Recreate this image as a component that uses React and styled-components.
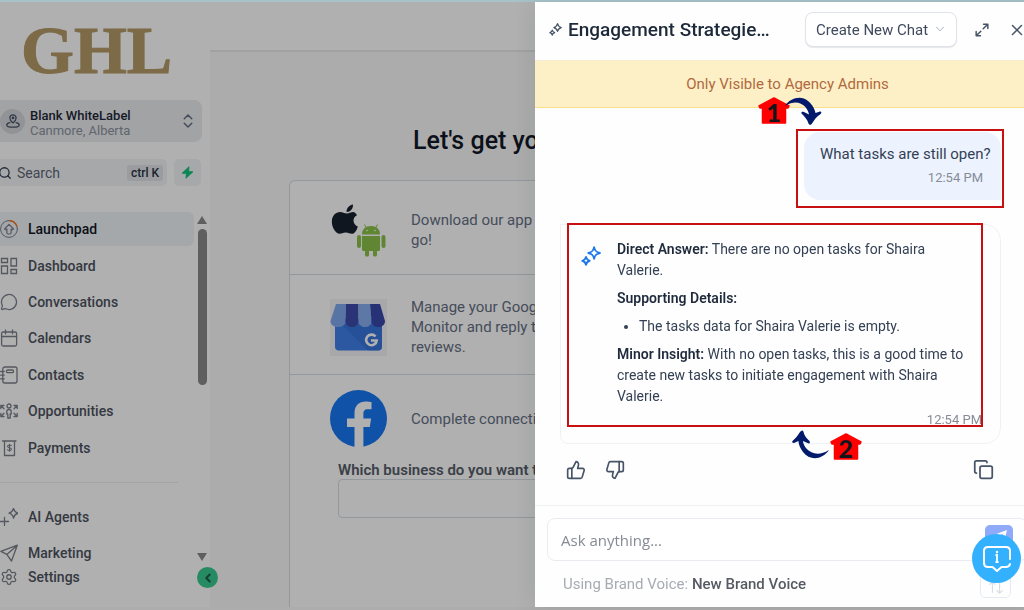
import styled, { createGlobalStyle } from "styled-components";
import {
  ChevronDown,
  ChevronLeft,
  ChevronsUpDown,
  Copy,
  MessageCircle,
  Search,
  Settings,
  ThumbsDown,
  ThumbsUp,
  X,
} from "lucide-react";

const NavItems = [
  { label: "Launchpad", icon: "launchpad", active: true },
  { label: "Dashboard", icon: "dashboard" },
  { label: "Conversations", icon: "conversations" },
  { label: "Calendars", icon: "calendars" },
  { label: "Contacts", icon: "contacts" },
  { label: "Opportunities", icon: "opportunities" },
  { label: "Payments", icon: "payments" },
];

const MoreItems = [
  { label: "AI Agents", icon: "agents" },
  { label: "Marketing", icon: "marketing" },
];

const Line = ({ size = 18, width = 1.3, children }) => (
  <svg
    width={size}
    height={size}
    viewBox="0 0 18 18"
    fill="none"
    stroke="currentColor"
    strokeWidth={width}
    strokeLinecap="round"
    strokeLinejoin="round"
    aria-hidden="true"
  >
    {children}
  </svg>
);

const icons = {
  launchpad: (
    <Line>
      <circle cx="9" cy="9" r="8.4" strokeWidth="1" />
      <path d="M9.5.6a8.4 8.4 0 0 1 7.4 5.6" stroke="#f97316" />
      <path
        d="M9 4.3 4.9 8.5c-.6.7 0 1.4.8 1.1l1.2-.5v3.7c0 .8.5 1.2 1.2 1.2h1.8c.7 0 1.2-.4 1.2-1.2V9.1l1.2.5c.8.3 1.4-.4.8-1.1z"
        strokeWidth="1.2"
      />
    </Line>
  ),
  dashboard: (
    <Line>
      <path
        d="M1.5 1.5h6v4h-6zM1.5 9h6v7.5h-6zM11 1.5h5.5V9H11zM11 12.5h5.5v4H11z"
        strokeLinejoin="miter"
      />
    </Line>
  ),
  conversations: <MessageCircle size={18} strokeWidth={1.7} />,
  calendars: (
    <Line>
      <rect x="1.6" y="3" width="15" height="14" rx="1.5" />
      <path d="M1.6 7.5h15M5.5.8v4M12.5.8v4" />
    </Line>
  ),
  contacts: (
    <Line>
      <rect x="2.8" y="1" width="14.2" height="16" rx="2" />
      <rect x="6.5" y="4" width="7" height="2.6" rx="1.2" />
      <path d="M.6 5.5h3.6M.6 9.2h3.6M.6 12.8h3.6" />
    </Line>
  ),
  opportunities: (
    <Line>
      <circle cx="9" cy="4" r="2" />
      <path d="M9 7.5c-1.5 0-2.2 1-2.2 2V12h1v4h2.4v-4h1V9.5c0-1-.7-2-2.2-2z" />
      <path d="M.8 3.5H4M.8 3.5v3M1 3.7l3 3M17.2 3.5H14M17.2 3.5v3M17 3.7l-3 3M.8 14.5H4M.8 14.5v-3M1 14.3l3-3M17.2 14.5H14M17.2 14.5v-3M17 14.3l-3-3" />
    </Line>
  ),
  payments: (
    <Line>
      <path d="M2.5 2H16M4.5 2v14.5h10V2" />
      <path
        d="M11.3 6.6c-.5-.7-3.7-1-3.7.8 0 1.7 3.8 1 3.8 2.8 0 1.7-3.3 1.5-3.9.6M9.5 5.2v7"
        strokeWidth="1.1"
      />
    </Line>
  ),
  agents: (
    <Line>
      <path d="M13.5.5c.8 3 1.5 3.900 4.500 4.700-3 .8-3.700 1.700-4.500 4.800-.8-3.100-1.500-4-4.500-4.800 3-.8 3.700-1.700 4.500-4.700zM4.500 9.500v8M.5 13.500h8" />
    </Line>
  ),
  marketing: (
    <Line>
      <path d="M17.3 1.2.9 7.4l5.9 3 4.7 6.6zM6.8 10.4l10.3-9" />
    </Line>
  ),
};

const Sparkles = ({ size }) => (
  <Line size={size} width={1.7}>
    <path d="M11.8 1c.7 3.3 1.7 4.4 5.2 5.3-3.5.9-4.5 2-5.2 5.3-.7-3.3-1.7-4.4-5.2-5.3 3.5-.9 4.5-2 5.2-5.3zM4.5 9.8c.4 1.9 1.2 2.8 3.3 3.5-2.1.6-2.9 1.5-3.3 3.6-.4-2.1-1.2-3-3.3-3.6 2.1-.7 2.9-1.6 3.3-3.5z" />
  </Line>
);

const Expand = () => (
  <Line size={14} width={1.9}>
    <path d="M11 1.5h5.5V7M16.5 1.5l-6 6M7 16.5H1.5V11M1.5 16.5l6-6" />
  </Line>
);

const PhoneApps = () => (
  <svg width="57" height="54" viewBox="0 0 57 54" aria-hidden="true">
    <g transform="translate(-.5 0) scale(1.18 1.18)">
      <path
        fill="#18202f"
        d="M18.5 5.8c1-1.2 1.5-2.8 1.4-4.6-1.6.2-3.2 1.1-4.1 2.3-.9 1.1-1.5 2.7-1.3 4.2 1.5.1 3-.7 4-1.9zM20.2 7.6c-2.3 0-3.4 1.3-5.6 1.3-1.9 0-3.5-1.2-5.7-1.2-3.5 0-6.9 2.9-6.9 8.4 0 4.8 3.5 10 6.5 10 1.8 0 2.7-1.1 5.3-1.1 2.5 0 3.3 1.1 5.2 1.1 2.3 0 4.2-3.1 5-6.2-4.7-2-4.7-7.8-.7-9.5-1-1.9-2.4-2.8-3.1-2.8z"
      />
    </g>
    <g fill="#8bc34a">
      <path d="M32 31.5C32 26 35.5 23 41 23s9 3 9 8.5z" />
      <path d="M32 33h18v13.5c0 1-.8 1.5-1.5 1.5H47v4c0 2-4 2-4 0v-4h-4v4c0 2-4 2-4 0v-4h-1.5c-.8 0-1.5-.6-1.5-1.5z" />
      <rect x="27" y="32" width="4" height="13" rx="2" />
      <rect x="51.5" y="32" width="4" height="13" rx="2" />
      <path d="m34.5 21.5 2 3.5M47.5 21.5l-2 3.5" stroke="#8bc34a" />
    </g>
    <circle cx="37" cy="27.5" r=".8" fill="#fff" />
    <circle cx="45" cy="27.5" r=".8" fill="#fff" />
  </svg>
);

const Storefront = () => (
  <svg width="57" height="57" viewBox="0 0 57 57" aria-hidden="true">
    <path fill="#f3f4f6" d="M0 0h57v57H0z" />
    <path fill="#3f80e8" d="M5 20h47v28c0 2-1.5 3.5-3.5 3.5h-40C6.5 51.5 5 50 5 48z" />
    <path fill="#2f6bd0" d="m12 26 26 25.5h10.5c2 0 3.5-1.5 3.5-3.5V26z" opacity=".5" />
    <path fill="#7fa9ef" d="M6 5h10l-.5 17c0 8-15 8-15 0z" />
    <path fill="#3c4bab" d="M16 5h12.500v17c0 8-13 8-13 0z" />
    <path fill="#88aff0" d="M28.500 5H40l1.500 17c0 8-13 8-13 0z" />
    <path fill="#3949ab" d="M40 5h10l5 17c0 8-13.500 8-13.500 0z" />
    <path
      d="M45.500 37.500a5.300 5.300 0 1 0 1.200 4H41"
      fill="none"
      stroke="#fff"
      strokeWidth="2.6"
    />
  </svg>
);

const Facebook = () => (
  <svg width="57" height="57" viewBox="0 0 57 57" aria-hidden="true">
    <circle cx="28.5" cy="28.5" r="28.5" fill="#1877f2" />
    <path
      fill="#fff"
      d="M24.5 57V37H17v-8.5h7.5V23c0-7.5 4.4-11.600 11.200-11.600 2.300 0 5.800.6 5.800.6v7.200h-3.700c-3.400 0-4.400 2-4.400 4.300v5h7.700L39.800 37h-6.400v20z"
    />
  </svg>
);

const House = ({ number, left, top }) => (
  <Marker $left={left} $top={top}>
    <svg width="34" height="30" viewBox="0 0 34 30" aria-hidden="true">
      <path
        d="M17 3 32 11l-1 2h-2.500v15h-23V13H3l-1-2z"
        fill="#fe0000"
        stroke="#fe0000"
        strokeWidth="1.5"
        strokeLinejoin="round"
      />
    </svg>
    <MarkerNumber>{number}</MarkerNumber>
  </Marker>
);

const NavLink = ({ item }) => (
  <NavRow href="#" $active={item.active}>
    {icons[item.icon]}
    {item.label}
  </NavRow>
);

const App = () => {
  return (
    <Page>
      <GlobalStyle />
      <Sidebar>
        <Logo>GHL</Logo>
        <Account type="button">
          <Avatar>
            <Line size={14} width={1.6}>
              <path d="M9 11.5s4-3.600 4-6.500a4 4 0 0 0-8 0c0 2.900 4 6.500 4 6.500z" />
              <circle cx="9" cy="5" r="1" />
              <path d="M5 11c-2.500.4-4 1.500-4 3 0 1.800 3.500 3 8 3s8-1.200 8-3c0-1.500-1.500-2.600-4-3" />
            </Line>
          </Avatar>
          <AccountText>
            <AccountName>Blank WhiteLabel</AccountName>
            <AccountPlace>Canmore, Alberta</AccountPlace>
          </AccountText>
          <ChevronsUpDown size={18} strokeWidth={2} />
        </Account>
        <SearchRow>
          <SearchBox>
            <Search size={14} strokeWidth={2.2} />
            <SearchInput type="text" placeholder="Search" aria-label="Search" />
            <Kbd>ctrl K</Kbd>
          </SearchBox>
          <QuickBtn type="button" aria-label="Quick actions">
            <svg width="13" height="13" viewBox="0 0 13 13" aria-hidden="true">
              <path
                d="M8 .8 1.2 7.200h4.300L5 12.200l6.800-6.400H7.500z"
                fill="#10c27c"
                stroke="#10c27c"
                strokeLinejoin="round"
              />
            </svg>
          </QuickBtn>
        </SearchRow>
        <NavArea>
          <Nav>
            <MainLinks>
              {NavItems.map((item) => (
                <NavLink key={item.label} item={item} />
              ))}
            </MainLinks>
            <Divider />
            <MoreLinks>
              {MoreItems.map((item) => (
                <NavLink key={item.label} item={item} />
              ))}
            </MoreLinks>
          </Nav>
          <Scroll>
            <ScrollArrow />
            <ScrollThumb />
            <ScrollArrow $down />
          </Scroll>
        </NavArea>
        <SettingsLink href="#">
          <Settings size={18} strokeWidth={1.7} />
          Settings
        </SettingsLink>
        <Collapse type="button" aria-label="Collapse sidebar">
          <ChevronLeft size={14} strokeWidth={3.5} />
        </Collapse>
      </Sidebar>

      <Main>
        <TopBar />
        <Heading>Let's get you</Heading>
        <Steps>
          <Step>
            <PhoneApps />
            <StepText>
              Download our app and
              <br />
              go!
            </StepText>
          </Step>
          <Step>
            <Storefront />
            <StepText>
              Manage your Google
              <br />
              Monitor and reply to
              <br />
              reviews.
            </StepText>
          </Step>
          <Step $last>
            <Facebook />
            <StepText>Complete connecting</StepText>
          </Step>
          <Business>
            <BusinessLabel htmlFor="business">Which business do you want to</BusinessLabel>
            <BusinessInput id="business" type="text" />
          </Business>
        </Steps>
      </Main>
      <Backdrop />

      <Drawer>
        <DrawerHead>
          <Sparkles size={13} />
          <DrawerTitle>Engagement Strategie…</DrawerTitle>
          <ChatPicker>
            <ChatSelect aria-label="Chat" defaultValue="new">
              <option value="new">Create New Chat</option>
            </ChatSelect>
            <ChevronDown size={14} strokeWidth={1.8} />
          </ChatPicker>
          <IconBtn type="button" aria-label="Expand">
            <Expand />
          </IconBtn>
          <IconBtn type="button" aria-label="Close">
            <X size={18} strokeWidth={2} />
          </IconBtn>
        </DrawerHead>
        <Banner>Only Visible to Agency Admins</Banner>
        <Thread>
          <Question>
            <p>What tasks are still open?</p>
            <Time>12:54 PM</Time>
            <QuestionFrame />
          </Question>
          <Answer>
            <Sparkles size={20} />
            <AnswerBody>
              <p>
                <b>Direct Answer:</b> There are no open tasks for Shaira
                <br />
                Valerie.
              </p>
              <p>
                <b>Supporting Details:</b>
              </p>
              <ul>
                <li>The tasks data for Shaira Valerie is empty.</li>
              </ul>
              <p>
                <b>Minor Insight:</b> With no open tasks, this is a good time to
                <br />
                create new tasks to initiate engagement with Shaira
                <br />
                Valerie.
              </p>
              <Time>12:54 PM</Time>
            </AnswerBody>
            <AnswerFrame />
          </Answer>
          <Actions>
            <IconBtn type="button" aria-label="Good answer">
              <ThumbsUp size={20} strokeWidth={2} />
            </IconBtn>
            <IconBtn type="button" aria-label="Bad answer">
              <ThumbsDown size={20} strokeWidth={2} />
            </IconBtn>
            <CopyBtn type="button" aria-label="Copy">
              <Copy size={21} strokeWidth={2} />
            </CopyBtn>
          </Actions>
        </Thread>
        <Composer>
          <AskBox>
            <AskInput type="text" placeholder="Ask anything..." aria-label="Ask anything" />
            <SendBtn type="button" aria-label="Send">
              <svg width="18" height="18" viewBox="0 0 18 18" aria-hidden="true">
                <path d="M17 3 1 9l5 2.5L14 6 8 13v5l3-3.500 3 1.500z" fill="#fff" />
              </svg>
            </SendBtn>
          </AskBox>
          <VoiceRow>
            <span>
              Using Brand Voice: <b>New Brand Voice</b>
            </span>
            <SwapBtn type="button" aria-label="Swap voice">
              <Line size={16} width={1.3}>
                <path d="M5 15V3M2 6l3-3 3 3M13 5v11M10 13l3 3 3-3" />
              </Line>
            </SwapBtn>
          </VoiceRow>
        </Composer>

        <House number="1" left={222} top={93} />
        <Marker $left={249} $top={95}>
          <svg width="40" height="30" viewBox="0 0 40 30" aria-hidden="true">
            <path
              d="M1 9C6 1 17-2 24 4c5 4 7 9 7.500 12l4.500-1.500c2 0 1.500 2 0 3-4 2.500-6 6-8 9-1 2-3 1.500-3.500 0-1-4-4-7-7-10-.5-2 1-2 2.500-1.500l5 2.500C24 10 15 0 1 9z"
              fill="#03196b"
            />
          </svg>
        </Marker>
        <House number="2" left={294} top={429} />
        <Marker $left={256} $top={427}>
          <svg width="40" height="32" viewBox="0 0 40 32" aria-hidden="true">
            <path
              d="M38 21C31 31 19 32 12 23 9 19 7.500 15 7.500 12l-4.500 2c-2 0-2.500-1-1-2.500C5 9 7 6 9 3c1.500-2 3-2 3.500 0 1 4 3 6 6 9 1 2 0 3-2 2l-4.500-2c0 6 10 19 26 9z"
              fill="#03196b"
            />
          </svg>
        </Marker>
      </Drawer>
      <HelpBtn type="button" aria-label="Help">
        <svg width="30" height="30" viewBox="0 0 30 30" fill="none" aria-hidden="true">
          <path
            d="M28 15V7c0-2.500-1.500-4-4-4H6C3.500 3 2 4.500 2 7v12c0 2.500 1.500 4 4 4h4.500l4.500 4 4.500-4H24c2 0 3.500-1 4-3"
            stroke="#fff"
            strokeWidth="2"
            strokeLinecap="round"
            strokeLinejoin="round"
          />
          <path d="M13.500 11H15v7M13.500 18h3" stroke="#fff" strokeWidth="1.8" />
          <circle cx="15" cy="8" r="1.2" fill="#fff" />
        </svg>
      </HelpBtn>
    </Page>
  );
};

const GlobalStyle = createGlobalStyle`
  * {
    box-sizing: border-box;
  }
  body {
    margin: 0;
    overflow: hidden;
    font-family: Roboto, "Liberation Sans", sans-serif;
    font-size: 15px;
    color: #344054;
  }
  button, input, select {
    font-family: inherit;
    color: inherit;
  }
  button {
    cursor: pointer;
  }
  a {
    color: inherit;
    text-decoration: none;
  }
  p, h1, h2, ul {
    margin: 0;
  }
`;

const Page = styled.div`
  display: flex;
  height: 100vh;
  overflow: hidden;
  border-top: 2px solid #a5c3c8;
  border-bottom: 3px solid #adadad;
`;

const Sidebar = styled.aside`
  position: relative;
  display: flex;
  flex-direction: column;
  flex: 0 0 210px;
  min-width: 0;
  background: #fff;
`;

const Logo = styled.div`
  height: 98px;
  padding-left: 21px;
  font-family: "Liberation Serif", serif;
  font-size: 68px;
  font-weight: bold;
  line-height: 96px;
  color: #b59b68;
  -webkit-text-stroke: 1px #b59b68;
`;

const Account = styled.button`
  display: flex;
  align-items: center;
  gap: 5px;
  height: 42px;
  margin-right: 8px;
  padding: 0 5px 0 0;
  background: #e9ecf0;
  border: none;
  border-radius: 0 8px 8px 0;
  color: #667085;
  text-align: left;
`;

const Avatar = styled.span`
  display: flex;
  align-items: center;
  justify-content: center;
  width: 25px;
  height: 25px;
  border-radius: 50%;
  background: #d3d5d9;
  color: #475467;
`;

const AccountText = styled.span`
  display: flex;
  flex: 1;
  flex-direction: column;
  padding-top: 3px;
  font-size: 13px;
  line-height: 15px;
`;

const AccountName = styled.span`
  font-weight: 500;
  color: #1f2838;
`;

const AccountPlace = styled.span`
  color: #8d939f;
`;

const SearchRow = styled.div`
  display: flex;
  gap: 7px;
  margin: 17px 9px 0 0;
`;

const SearchBox = styled.div`
  display: flex;
  align-items: center;
  flex: 1;
  gap: 5px;
  height: 27px;
  min-width: 0;
  margin-left: -2px;
  padding-right: 4px;
  background: #f2f4f7;
  border-radius: 0 5px 5px 0;
`;

const SearchInput = styled.input`
  flex: 1;
  width: 100%;
  min-width: 0;
  padding: 0;
  background: none;
  border: none;
  outline: none;
  font-size: 14px;
  &::placeholder {
    color: #5d6675;
  }
`;

const Kbd = styled.kbd`
  flex-shrink: 0;
  padding: 0 4px;
  background: #dfe2e6;
  border-radius: 3px;
  font-family: inherit;
  font-size: 12px;
  font-weight: 500;
  line-height: 16px;
  color: #2a3344;
`;

const QuickBtn = styled.button`
  display: flex;
  align-items: center;
  justify-content: center;
  width: 27px;
  padding: 0;
  background: #f2f4f7;
  border: none;
  border-radius: 5px;
`;

const NavArea = styled.div`
  display: flex;
  gap: 3px;
  margin-top: 25px;
`;

const Nav = styled.nav`
  flex: 1;
`;

const MainLinks = styled.div`
  display: grid;
  grid-auto-rows: 1fr;
  align-items: center;
  height: 255px;
`;

const MoreLinks = styled(MainLinks)`
  height: 72px;
`;

const NavRow = styled.a`
  display: flex;
  align-items: center;
  gap: 10px;
  height: 34px;
  border-radius: 0 6px 6px 0;
  background: ${({ $active }) => ($active ? "#f0f3f7" : "none")};
  font-size: 14px;
  font-weight: 500;
  color: ${({ $active }) => ($active ? "#101828" : "#4d535f")};
  svg {
    color: #7b808a;
  }
`;

const Divider = styled.hr`
  margin: 16px 16px 16px 0;
  border: none;
  border-top: 1px solid #eceef0;
`;

const Scroll = styled.div`
  display: flex;
  flex-direction: column;
  align-items: center;
  width: 10px;
  margin: 5px 3px 10px 0;
`;

const ScrollArrow = styled.span`
  border: 5px solid transparent;
  border-top-width: ${({ $down }) => ($down ? "8px" : "0")};
  border-bottom-width: ${({ $down }) => ($down ? "0" : "8px")};
  border-top-color: #8a8a8a;
  border-bottom-color: #8a8a8a;
  margin-top: ${({ $down }) => ($down ? "auto" : "0")};
`;

const ScrollThumb = styled.span`
  width: 9px;
  height: 156px;
  margin-top: 5px;
  border-radius: 5px;
  background: #8a8a8a;
`;

const SettingsLink = styled(NavRow)`
  height: 20px;
  margin-top: -4px;
`;

/* sits on the edge between sidebar and page */
const Collapse = styled.button`
  position: absolute;
  right: -8px;
  bottom: 19px;
  z-index: 1;
  display: flex;
  align-items: center;
  justify-content: center;
  width: 21px;
  height: 21px;
  padding: 0;
  border: none;
  border-radius: 50%;
  background: #37ca90;
  color: #1f5c48;
`;

const Main = styled.main`
  display: flex;
  flex: 1;
  flex-direction: column;
  min-width: 0;
  background: #fafafa;
`;

const TopBar = styled.header`
  height: 50px;
  background: #fff;
  border-bottom: 2px solid #e9eaec;
`;

const Heading = styled.h1`
  margin: 73px 0 23px 203px;
  font-size: 25px;
  font-weight: 500;
  line-height: 32px;
  color: #101828;
`;

const Steps = styled.section`
  flex: 1;
  margin-left: 79px;
  background: #fff;
  border: 1px solid #d6dce4;
  border-width: 1px 0 0 1px;
  border-radius: 6px 0 0 0;
`;

const Step = styled.div`
  display: flex;
  align-items: center;
  gap: 24px;
  padding: ${({ $last }) => ($last ? "15px 0 0 40px" : "22px 0 17px 40px")};
  border-bottom: ${({ $last }) => ($last ? "none" : "1px solid #d6dce4")};
  > svg {
    flex-shrink: 0;
  }
`;

const StepText = styled.p`
  line-height: 20px;
  white-space: nowrap;
  color: #667085;
`;

const Business = styled.div`
  display: flex;
  flex-direction: column;
  margin: 14px 0 0 48px;
`;

const BusinessLabel = styled.label`
  line-height: 18px;
  white-space: nowrap;
  font-weight: 600;
  color: #565d69;
`;

const BusinessInput = styled.input`
  height: 39px;
  background: #fff;
  border: 1px solid #d6dce4;
  border-radius: 4px;
`;

const Backdrop = styled.div`
  position: fixed;
  inset: 2px 0 3px;
  z-index: 2;
  background: rgba(0, 0, 0, 0.31);
`;

/* wider than the visible strip, it runs past the right edge */
const Drawer = styled.aside`
  position: fixed;
  top: 2px;
  right: -16px;
  bottom: 3px;
  z-index: 3;
  display: flex;
  flex-direction: column;
  width: 505px;
  background: #fefefe;
  box-shadow: -6px 0 20px rgba(16, 24, 40, 0.08);
`;

const DrawerHead = styled.header`
  display: flex;
  align-items: center;
  height: 58px;
  padding: 0 14px 3px;
  color: #475467;
`;

const DrawerTitle = styled.h2`
  flex: 1;
  margin-left: 6px;
  font-size: 19px;
  font-weight: 500;
  white-space: nowrap;
  color: #1d2939;
`;

const ChatPicker = styled.div`
  position: relative;
  margin-right: 18px;
  svg {
    position: absolute;
    top: 10px;
    right: 10px;
    color: #b8bec8;
    pointer-events: none;
  }
`;

const ChatSelect = styled.select`
  appearance: none;
  width: 152px;
  height: 35px;
  padding: 0 22px 0 10px;
  background: #fff;
  border: 1px solid #dfe3ea;
  border-radius: 8px;
  box-shadow: 0 1px 1px rgba(16, 24, 40, 0.1);
  font-size: 15px;
  color: #3f4a5c;
`;

const IconBtn = styled.button`
  display: flex;
  margin-right: 19px;
  padding: 0;
  background: none;
  border: none;
  color: #475467;
  &:last-child {
    margin-right: 0;
  }
`;

const Banner = styled.div`
  height: 48px;
  background: #fdf0c6;
  border-top: 1px solid #f6ecd0;
  border-bottom: 1px solid #fae08c;
  font-size: 15px;
  line-height: 46px;
  text-align: center;
  color: #b0693f;
`;

const Thread = styled.div`
  display: flex;
  flex: 1;
  flex-direction: column;
  min-height: 0;
  padding: 24px 39px 0 25px;
  border-bottom: 1px solid #eff0f2;
`;

const Question = styled.div`
  position: relative;
  align-self: flex-end;
  width: 197px;
  height: 68px;
  padding: 12px 16px;
  background: #ecf3fe;
  border-radius: 16px 16px 0 16px;
  line-height: 21px;
  white-space: nowrap;
`;

const Time = styled.div`
  padding-right: 2px;
  font-size: 13px;
  line-height: 26px;
  text-align: right;
  color: #868c96;
`;

const Frame = styled.div`
  position: absolute;
  border: 2px solid #c81010;
  pointer-events: none;
`;

const QuestionFrame = styled(Frame)`
  inset: -3px -3px -8px -8px;
`;

const Answer = styled.div`
  position: relative;
  display: flex;
  gap: 16px;
  height: 220px;
  margin-top: 24px;
  padding: 14px 16px 0 20px;
  border: 1px solid #eff1f3;
  border-radius: 0 16px 16px 8px;
  > svg {
    flex-shrink: 0;
    margin-top: 7px;
    color: #1f78ea;
  }
`;

const AnswerBody = styled.div`
  flex: 1;
  min-width: 0;
  font-size: 14px;
  line-height: 21px;
  white-space: nowrap;
  p,
  ul {
    margin-bottom: 7px;
  }
  p:last-of-type {
    margin-bottom: 0;
  }
  ul {
    padding-left: 22px;
  }
  b {
    font-weight: 600;
    color: #1f2a3c;
  }
`;

const AnswerFrame = styled(Frame)`
  inset: -2px 17px 16px 6px;
`;

const Actions = styled.div`
  display: flex;
  align-items: center;
  margin-top: 15px;
  padding: 0 7px 0 6px;
`;

const CopyBtn = styled(IconBtn)`
  margin-left: auto;
`;

const Composer = styled.footer`
  padding: 12px 12px 9px;
`;

const AskBox = styled.div`
  display: flex;
  align-items: flex-start;
  height: 43px;
  padding: 6px 14px 0 13px;
  background: #fff;
  border: 1px solid #e9ebf0;
  border-radius: 8px;
`;

const AskInput = styled.input`
  flex: 1;
  height: 30px;
  padding: 0;
  background: none;
  border: none;
  outline: none;
  font-family: "Open Sans", "Noto Sans", sans-serif;
  font-size: 15px;
  &::placeholder {
    color: #858b95;
  }
`;

const SendBtn = styled.button`
  display: flex;
  align-items: flex-start;
  justify-content: center;
  width: 28px;
  height: 28px;
  padding: 2px 0 0;
  border: none;
  border-radius: 5px;
  background: #8eaaf8;
`;

const VoiceRow = styled.div`
  display: flex;
  align-items: center;
  justify-content: space-between;
  margin-top: 8px;
  padding: 0 17px 0 16px;
  color: #a7abb3;
  b {
    font-weight: 500;
    color: #565a63;
  }
`;

const SwapBtn = styled.button`
  display: flex;
  align-items: center;
  justify-content: center;
  width: 31px;
  height: 29px;
  padding: 6px 0 0;
  background: none;
  border: 1px solid #e6eaf3;
  border-radius: 5px;
  color: #d9dde6;
`;

const Marker = styled.div`
  position: absolute;
  left: ${({ $left }) => $left}px;
  top: ${({ $top }) => $top}px;
  line-height: 0;
`;

const MarkerNumber = styled.span`
  position: absolute;
  inset: 4px 0 0;
  font-family: Lato, sans-serif;
  font-size: 25px;
  font-weight: 900;
  line-height: 26px;
  text-align: center;
  color: #14141c;
`;

const HelpBtn = styled.button`
  position: fixed;
  right: 3px;
  bottom: 27px;
  z-index: 4;
  display: flex;
  align-items: center;
  justify-content: center;
  width: 49px;
  height: 49px;
  padding: 0;
  border: none;
  border-radius: 50%;
  background: #33b1ff;
`;

export default App;
